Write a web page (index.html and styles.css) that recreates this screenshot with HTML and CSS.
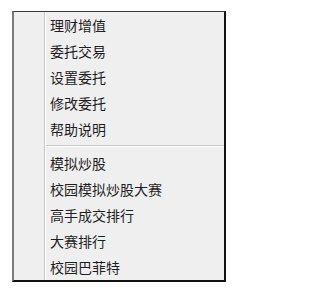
FILE: index.html
```html
<!DOCTYPE html>
<html lang="zh">
<head>
<meta charset="utf-8">
<link rel="stylesheet" href="styles.css">
</head>
<body>
<div class="menu">
  <ul class="group">
    <li class="item">理财增值</li>
    <li class="item">委托交易</li>
    <li class="item">设置委托</li>
    <li class="item">修改委托</li>
    <li class="item">帮助说明</li>
  </ul>
  <div class="sep"></div>
  <ul class="group">
    <li class="item">模拟炒股</li>
    <li class="item">校园模拟炒股大赛</li>
    <li class="item">高手成交排行</li>
    <li class="item">大赛排行</li>
    <li class="item">校园巴菲特</li>
  </ul>
</div>
</body>
</html>
```
FILE: styles.css
```css
html, body {
  margin: 0;
  padding: 0;
  background: #ffffff;
}
body {
  padding: 11px 0 0 12px;
  font-family: "Noto Sans CJK SC", "Noto Sans", sans-serif;
}
.menu {
  width: 210px;
  background: #efefef;
  border-top: 1px solid #3a3a3a;
  border-left: 2px solid #7a7a7a;
  border-right: 2px solid #111111;
  border-bottom: 2px solid #111111;
  background-image: linear-gradient(to right, transparent 30px, #c8c8c8 30px, #c8c8c8 31px, #ffffff 31px, #ffffff 32px, transparent 32px);
}
.group {
  list-style: none;
  margin: 0;
  padding: 0;
}
.item {
  height: 26px;
  line-height: 26px;
  padding-left: 36px;
  font-size: 14px;
  color: #1e1e1e;
  white-space: nowrap;
}
.sep {
  height: 8px;
  margin-left: 32px;
  display: flex;
  flex-direction: column;
  justify-content: center;
}
.sep::before {
  content: "";
  display: block;
  height: 1px;
  background: #c8c8c8;
  border-bottom: 1px solid #ffffff;
}
```
